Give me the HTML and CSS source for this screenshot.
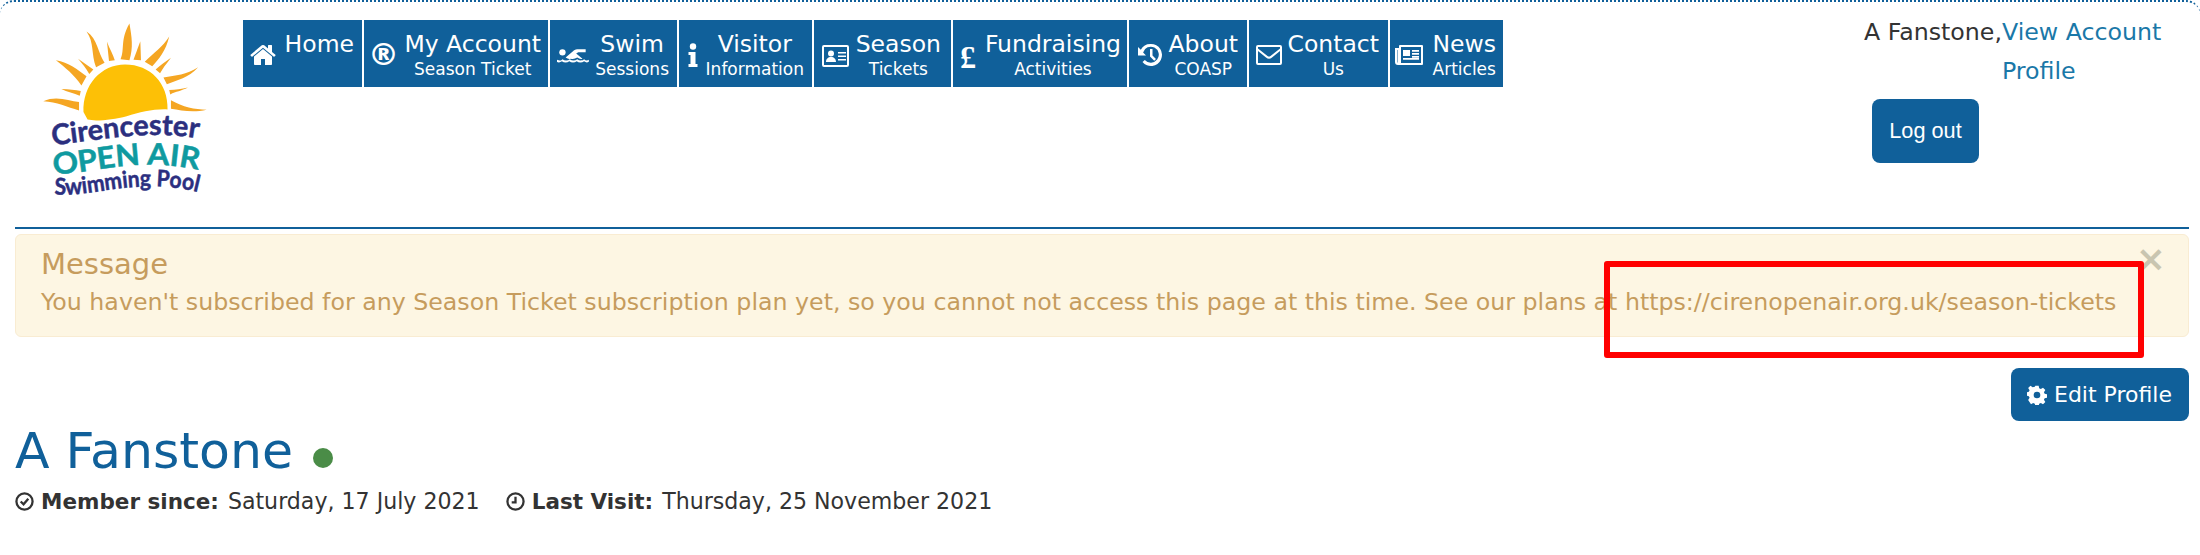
FILE: index.html
```html
<!DOCTYPE html>
<html lang="en">
<head>
    <meta charset="UTF-8">
    <title>Cirencester Open Air Swimming Pool</title>
    <link rel="stylesheet" href="styles.css">
</head>
<body>
    <div class="page">
        <header class="header">
            <a href="#" class="logo">
                <svg viewBox="0 0 570 570" width="194" height="194">
                    <path class="sun" d="M163 300C160 220 215 160 285 160C360 160 412 215 410 292C370 290 330 300 290 312C250 322 200 328 175 322Z"/>
                    <g class="rays">
                        <path d="M272 145C285 115 270 90 298 40C305 80 310 110 298 148Z"/>
                        <path d="M232 93C240 115 250 130 255 148L238 150Z"/>
                        <path d="M172 63C205 85 205 125 225 155L200 168C185 130 195 95 172 63Z"/>
                        <path d="M330 92L332 148L310 146Z"/>
                        <path d="M415 78C405 120 385 145 365 165L343 152C370 125 395 110 415 78Z"/>
                        <path d="M420 140C405 160 395 172 388 186L375 175C390 160 405 152 420 140Z"/>
                        <path d="M500 168C470 200 440 205 408 218L398 198C435 192 465 190 500 168Z"/>
                        <path d="M470 228C450 238 435 240 418 248L415 235C435 235 450 232 470 228Z"/>
                        <path d="M525 293C485 302 450 295 420 290L420 265C455 285 490 292 525 293Z"/>
                        <path d="M82 148C120 155 145 175 172 195L157 222C135 190 110 170 82 148Z"/>
                        <path d="M147 143C165 155 178 165 192 175L180 188C170 170 160 158 147 143Z"/>
                        <path d="M98 232C120 232 140 235 155 238L152 252C135 245 115 240 98 232Z"/>
                        <path d="M45 268C85 250 120 268 150 270L150 295C115 285 85 270 45 268Z"/>
                    </g>
                    <defs>
                        <path id="lineA" d="M72 397C200 385 350 350 502 378"/>
                        <path id="lineB" d="M75 482C200 480 320 430 500 470"/>
                        <path id="lineC" d="M78 542C200 550 320 490 500 535"/>
                    </defs>
                    <text class="logo-navy logo-big"><textPath href="#lineA" textLength="430" lengthAdjust="spacingAndGlyphs">Cirencester</textPath></text>
                    <text class="logo-teal"><textPath href="#lineB" textLength="428" lengthAdjust="spacingAndGlyphs">OPEN AIR</textPath></text>
                    <text class="logo-navy logo-small"><textPath href="#lineC" textLength="424" lengthAdjust="spacingAndGlyphs">Swimming Pool</textPath></text>
                </svg>
            </a>

            <nav class="nav">
                <a href="#" class="nav-item w-home">
                    <svg class="ico ico-home" viewBox="0 0 1664 1792"><path d="M1408 992v480q0 26-19 45t-45 19h-384v-384h-256v384h-384q-26 0-45-19t-19-45v-480q0-1 .5-3t.5-3l575-474 575 474q1 2 1 6zm223-69l-62 74q-8 9-21 11h-3q-13 0-21-7l-692-577-692 577q-12 8-24 7-13-2-21-11l-62-74q-8-10-7-23.500t11-21.500l719-599q32-26 76-26t76 26l244 204v-195q0-14 9-23t23-9h192q14 0 23 9t9 23v408l219 182q10 8 11 21.500t-7 23.500z"/></svg>
                    <span class="nav-text">Home</span>
                </a>
                <a href="#" class="nav-item w-account">
                    <span class="glyph">®</span>
                    <span class="nav-text">My Account<small>Season Ticket</small></span>
                </a>
                <a href="#" class="nav-item w-swim">
                    <svg class="ico ico-swim" viewBox="0 0 30 18">
                        <circle cx="5" cy="6" r="3"/>
                        <path d="M8 11l7-6c1-1 2-2 4-2h8v3h-7l-2 1 6 5c-2 1-3 0-5-1-2 1-4 2-6 1-2 1-3 0-5-1z"/>
                        <path d="M0 13c2 1 4 1 5-.5 2 1.500 5 1.500 7 0 2 1.500 5 1.500 7 0 2 1.500 5 1.500 6.500 0 1.500 1.500 3 1.500 4.500.5v2c-2 1-3 .5-4.500-.5-2 1.500-5 1.500-7 0-2 1.500-5 1.500-7 0-2 1.500-5 1.500-7 0-1.500 1-3 1.500-5 .5z"/>
                    </svg>
                    <span class="nav-text">Swim<small>Sessions</small></span>
                </a>
                <a href="#" class="nav-item w-visitor">
                    <svg class="ico ico-info" viewBox="0 0 10 24">
                        <circle cx="5" cy="3.500" r="3.200"/>
                        <path d="M.5 9h7v12h2v3h-9v-3h2v-9h-2z"/>
                    </svg>
                    <span class="nav-text">Visitor<small>Information</small></span>
                </a>
                <a href="#" class="nav-item w-season">
                    <svg class="ico ico-card" viewBox="0 0 27 22">
                        <path fill-rule="evenodd" d="M2 0h23a2 2 0 0 1 2 2v18a2 2 0 0 1-2 2H2a2 2 0 0 1-2-2V2a2 2 0 0 1 2-2zm0 2v18h23V2z"/>
                        <circle cx="9" cy="8.500" r="3"/>
                        <path d="M4 17c0-3 2-5 5-5s5 2 5 5zM16 7h8v1.500h-8zM16 10.500h8v1.500h-8zM16 14h8v1.500h-8z"/>
                    </svg>
                    <span class="nav-text">Season<small>Tickets</small></span>
                </a>
                <a href="#" class="nav-item w-fund">
                    <span class="glyph glyph-pound">£</span>
                    <span class="nav-text">Fundraising<small>Activities</small></span>
                </a>
                <a href="#" class="nav-item w-about">
                    <svg class="ico ico-history" viewBox="0 0 24 24">
                        <path d="M13 1a11 11 0 1 1-8.500 18l2.300-2a8 8 0 1 0-1.700-7.500l2.900 2.900H0V4l2.800 2.800A11 11 0 0 1 13 1z"/>
                        <path d="M12 6h2.500v6.500l3.500 3.500-1.800 1.800-4.200-4.300z"/>
                    </svg>
                    <span class="nav-text">About<small>COASP</small></span>
                </a>
                <a href="#" class="nav-item w-contact">
                    <svg class="ico ico-mail" viewBox="0 0 26 20">
                        <path fill-rule="evenodd" d="M2 0h22a2 2 0 0 1 2 2v16a2 2 0 0 1-2 2H2a2 2 0 0 1-2-2V2a2 2 0 0 1 2-2zm0 6v12h22V6l-8 6.500c-2 1.700-4 1.700-6 0zm0-4v1.500l9.500 7.500c1 .8 2 .8 3 0L24 3.500V2z"/>
                    </svg>
                    <span class="nav-text">Contact<small>Us</small></span>
                </a>
                <a href="#" class="nav-item w-news">
                    <svg class="ico ico-news" viewBox="0 0 28 20">
                        <path fill-rule="evenodd" d="M5 0h22a1 1 0 0 1 1 1v18a1 1 0 0 1-1 1H3a3 3 0 0 1-3-3V3h4V1a1 1 0 0 1 1-1zm1 2v16H2.500V5H2v12a1 1 0 0 0 1 1h23V2z"/>
                        <path d="M8 5h7v6H8zM17 5h7v1.700h-7zM17 8h7v1.700h-7zM17 11h7v1.700h-7zM8 13h16v1.700H8z"/>
                    </svg>
                    <span class="nav-text">News<small>Articles</small></span>
                </a>
            </nav>

            <div class="user">
                <div class="user-line">
                    <span>A Fanstone,</span>
                    <a href="#" class="user-link">View Account Profile</a>
                </div>
                <button class="btn btn-logout">Log out</button>
            </div>
        </header>

        <hr class="rule">

        <div class="alert">
            <button class="alert-close">×</button>
            <h4 class="alert-title">Message</h4>
            <div class="alert-text">You haven't subscribed for any Season Ticket subscription plan yet, so you cannot not access this page at this time. See our plans at https://cirenopenair.org.uk/season-tickets</div>
        </div>

        <div class="actions">
            <a href="#" class="btn btn-edit">
                <svg class="ico-gear" viewBox="0 0 24 24"><path fill-rule="evenodd" d="M10 1h4l.6 3 2 .9 2.600-1.700 2.800 2.800-1.700 2.600.9 2 3 .6v4l-3 .6-.9 2 1.700 2.600-2.800 2.800-2.600-1.700-2 .9-.6 3h-4l-.6-3-2-.9-2.600 1.700L1.400 18l1.700-2.600-.9-2-3-.6v-4l3-.6.9-2L1.400 3.600 4.200 1l2.600 1.700 2.600-.7zM12 8a4 4 0 1 0 0 8 4 4 0 0 0 0-8z"/></svg>
                Edit Profile
            </a>
        </div>

        <h1 class="name">A Fanstone <span class="dot"></span></h1>

        <div class="meta">
            <svg class="ico-meta" viewBox="0 0 20 20"><circle cx="10" cy="10" r="8.500"/><path d="M6 10l3 3 5-6"/></svg>
            <b>Member since:</b> Saturday, 17 July 2021
            <svg class="ico-meta ico-gap" viewBox="0 0 20 20"><circle cx="10" cy="10" r="8.500"/><path d="M10 5v6H6"/></svg>
            <b>Last Visit:</b> Thursday, 25 November 2021
        </div>
    </div>

    <!-- red box drawn on the screenshot -->
    <div class="callout"></div>
</body>
</html>
```

FILE: styles.css
```css
* {
    box-sizing: border-box;
}

body {
    margin: 0;
    font-family: "DejaVu Sans", sans-serif;
    font-size: 23.700px;
    color: #333;
    background-color: #fff;
}

.page {
    height: 555px;
    padding: 0 11px 0 15px;
    border-top: 2px dotted #10609a;
    border-radius: 14px 14px 0 0;
}

.header {
    display: flex;
    height: 225px;
}

.logo {
    width: 228px;
    padding: 8px 0 0 13px;
    flex-shrink: 0;
}

.sun {
    fill: #fdc006;
}

.rays {
    fill: #f5a623;
}

.logo-navy {
    fill: #2b2f7f;
    stroke: #2b2f7f;
    stroke-width: 1.500px;
    font-family: "Lato", sans-serif;
    font-weight: 700;
}

.logo-big {
    font-size: 84px;
}

.logo-small {
    font-size: 68px;
}

.logo-teal {
    fill: #0f9aa0;
    stroke: #0f9aa0;
    stroke-width: 1.500px;
    font-family: "Lato", sans-serif;
    font-weight: 700;
    font-size: 88px;
}

.nav {
    display: flex;
    align-items: flex-start;
    gap: 2px;
    padding-top: 18px;
}

.nav-item {
    display: flex;
    align-items: center;
    justify-content: space-between;
    height: 67px;
    padding: 0 8px 0 7px;
    background-color: #10609a;
    color: #fff;
    text-decoration: none;
}

.w-home { width: 119px; }
.w-account { width: 184px; padding: 0 7px 0 4px; }
.w-swim { width: 127px; }
.w-visitor { width: 133px; }
.w-season { width: 137px; padding-right: 10px; }
.w-fund { width: 174px; padding-right: 6px; }
.w-about { width: 118px; padding-right: 9px; }
.w-contact { width: 139px; padding-right: 9px; }
.w-news { width: 113px; padding-right: 7px; }

.ico {
    width: 26px;
    height: 28px;
    fill: #fff;
    flex-shrink: 0;
    margin-top: 3px;
}

.ico-swim {
    width: 32px;
    height: 19px;
}

.ico-info {
    width: 10px;
    height: 24px;
    margin-left: 2px;
}

.ico-card {
    width: 27px;
    height: 22px;
    margin-left: 1px;
    margin-top: 4px;
}

.ico-history {
    width: 24px;
    height: 24px;
    margin-left: 2px;
}

.ico-mail {
    width: 26px;
    height: 20px;
}

.ico-news {
    width: 28px;
    height: 20px;
    margin-left: -2px;
}

.glyph {
    font-size: 31px;
    font-weight: 700;
    line-height: 1;
    margin-top: 2px;
}

.glyph-pound {
    font-family: "Liberation Serif", serif;
    font-size: 32px;
    margin-top: 6px;
}

.nav-text {
    align-self: flex-start;
    padding-top: 8px;
    font-size: 23.500px;
    line-height: 33px;
    text-align: center;
    white-space: nowrap;
}

.nav-text small {
    display: block;
    font-size: 17px;
    line-height: 17px;
}

.user {
    margin-left: auto;
    width: 325px;
    flex-shrink: 0;
}

.user-line {
    display: flex;
    line-height: 39px;
    padding-top: 11px;
}

.user-link {
    width: 165px;
    color: #1a78a8;
    text-decoration: none;
}

.btn {
    display: inline-block;
    background-color: #10609a;
    color: #fff;
    border: 0;
    border-radius: 8px;
    text-decoration: none;
}

.btn-logout {
    margin: 8px 0 0 8px;
    width: 107px;
    height: 64px;
    font-family: "Liberation Sans", sans-serif;
    font-size: 21.700px;
}

.rule {
    margin: 0;
    border: 0;
    border-top: 2px solid #10609a;
}

.alert {
    position: relative;
    margin-top: 5px;
    height: 103px;
    padding: 10px 25px;
    background-color: #fdf6e3;
    border: 1px solid #f9ecd2;
    border-radius: 6px;
    color: #c69c5d;
}

.alert-title {
    margin: 0;
    font-size: 29px;
    font-weight: 400;
    line-height: 38px;
}

.alert-text {
    line-height: 38px;
    white-space: nowrap;
}

.alert-close {
    position: absolute;
    top: 5px;
    right: 22px;
    padding: 0;
    border: 0;
    background: none;
    color: #c9c5b0;
    font-family: "DejaVu Sans", sans-serif;
    font-size: 36px;
    font-weight: 700;
    line-height: 38px;
}

.actions {
    display: flex;
    justify-content: flex-end;
    margin-top: 31px;
}

.btn-edit {
    display: flex;
    align-items: center;
    gap: 7px;
    height: 53px;
    width: 178px;
    padding-left: 16px;
    white-space: nowrap;
    font-size: 22px;
}

.ico-gear {
    width: 20px;
    height: 20px;
    fill: #fff;
}

.name {
    margin: 0;
    font-size: 50.500px;
    font-weight: 400;
    line-height: 60px;
    color: #10609a;
}

.dot {
    display: inline-block;
    width: 20px;
    height: 20px;
    margin-left: 4px;
    border-radius: 50%;
    background-color: #4a8c47;
}

.meta {
    margin-top: 6px;
    font-size: 22.100px;
    line-height: 28px;
    white-space: nowrap;
}

.meta b {
    font-size: 21.500px;
    margin-right: 2px;
}

.ico-meta {
    width: 19px;
    height: 19px;
    fill: none;
    stroke: #333;
    stroke-width: 2.400;
    vertical-align: -2px;
}

.ico-gap {
    margin-left: 19px;
}

.callout {
    position: absolute;
    left: 1604px;
    top: 261px;
    width: 540px;
    height: 97px;
    border: 6px solid #f00;
    border-radius: 3px;
}
```
